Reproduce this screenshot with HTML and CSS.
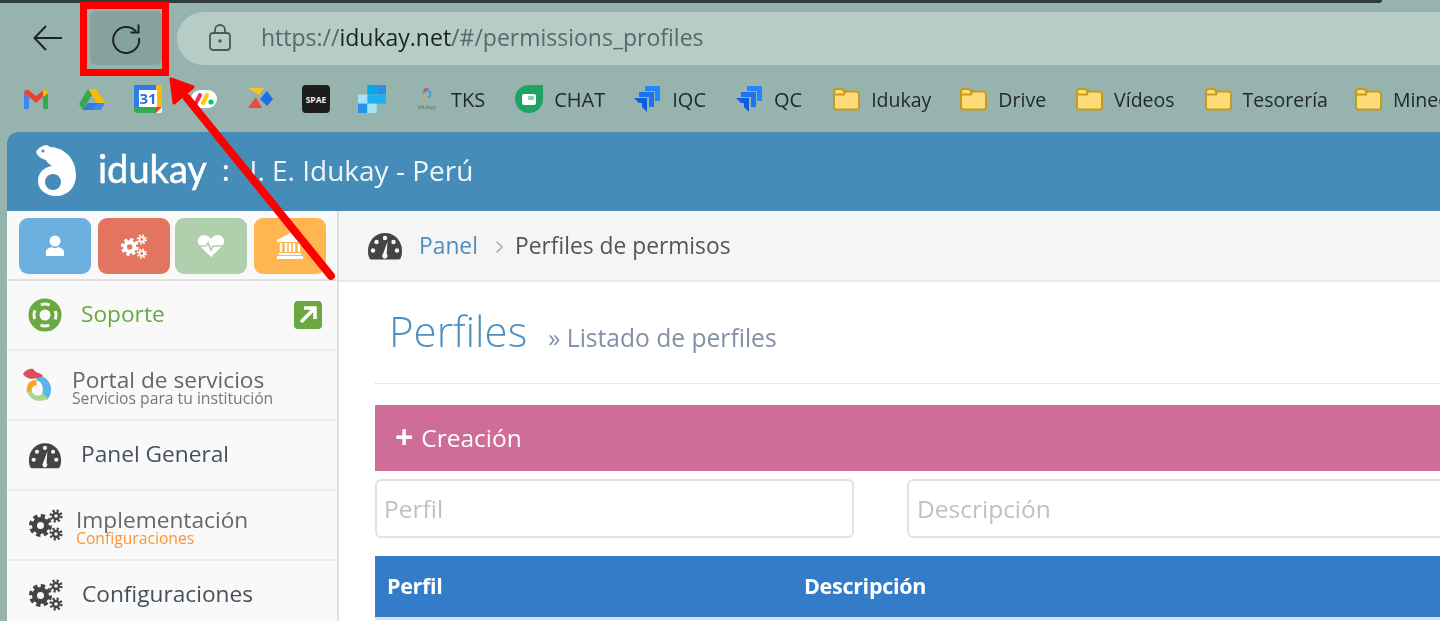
FILE: index.html
```html
<!DOCTYPE html>
<html lang="es">
<head>
<meta charset="utf-8">
<title>Perfiles de permisos</title>
<link rel="stylesheet" href="styles.css">
</head>
<body>
<svg class="defs" width="0" height="0" aria-hidden="true">
  <symbol id="gears" viewBox="0 0 36 32">
    <g fill="none" stroke="currentColor">
      <circle cx="12.5" cy="16.5" r="6" stroke-width="5"/>
      <circle cx="12.5" cy="16.5" r="9.5" stroke-width="4" stroke-dasharray="4.2 3.26"/>
      <circle cx="28" cy="7" r="3" stroke-width="2.4"/>
      <circle cx="28" cy="7" r="5.4" stroke-width="2.4" stroke-dasharray="2.2 2.04"/>
      <circle cx="28" cy="25" r="3" stroke-width="2.4"/>
      <circle cx="28" cy="25" r="5.4" stroke-width="2.4" stroke-dasharray="2.2 2.04"/>
    </g>
  </symbol>
  <symbol id="gauge" viewBox="0 0 36 28">
    <path fill="currentColor" d="M18 1C8 1 1 9 1 19c0 3 .5 5.500 1.500 7.500 .4.700 1 1 1.800 1h27.400c.8 0 1.400-.3 1.800-1 1-2 1.500-4.500 1.500-7.500C35 9 28 1 18 1z"/>
    <g fill="#f8f8f8">
      <circle cx="18" cy="6" r="2.200"/><circle cx="9.500" cy="10" r="2.200"/><circle cx="26.500" cy="10" r="2.200"/>
      <circle cx="6" cy="18.500" r="2.200"/><circle cx="30" cy="18.500" r="2.200"/>
      <path d="M20.500 9.500l-.8 12.500a2.600 2.600 0 1 1-3.700 0z"/>
    </g>
  </symbol>
  <symbol id="folder" viewBox="0 0 28 24">
    <path fill="#ffdc7a" stroke="#c79a1d" stroke-width="2" d="M2 4.500C2 3 3 2 4.500 2h5c1 0 1.500.5 2 1.500l.5 1h11.500C25 4.500 27 5.500 27 7v13c0 1.500-1 2.500-2.500 2.500h-20C3 22.500 2 21.500 2 20z"/>
    <path fill="none" stroke="#c79a1d" stroke-width="2" d="M2 7.500h10l1-3"/>
  </symbol>
  <symbol id="jira" viewBox="0 0 28 28">
    <path fill="#2684ff" d="M12 1h15v15h-5V6H12z"/>
    <path fill="#1a73f0" d="M6 7h15v15h-5V12H6z"/>
    <path fill="#0a5fe0" d="M1 13h13v14l-5-5v-4H6z"/>
  </symbol>
</svg>

<div class="tabstrip"></div>

<header class="toolbar">
  <button class="nav-btn" type="button" aria-label="Atrás">
    <svg width="32" height="28" viewBox="0 0 32 28"><path d="M30 14H3M14 2 2.500 14 14 26" fill="none" stroke="#1c2524" stroke-width="2"/></svg>
  </button>
  <button class="nav-btn nav-btn-hover" type="button" aria-label="Recargar">
    <svg width="32" height="32" viewBox="0 0 32 32"><path d="M26 9.500A13 13 0 1 0 29 16" fill="none" stroke="#1c2524" stroke-width="2"/><path d="M28.500 2.500v8h-8" fill="none" stroke="#1c2524" stroke-width="2"/></svg>
  </button>
  <div class="urlbar">
    <svg class="lock" width="24" height="28" viewBox="0 0 24 28"><rect x="2" y="9" width="20" height="17" rx="3" fill="none" stroke="#4e5a58" stroke-width="1.800"/><path d="M7 9V6a5 5 0 0 1 10 0v3" fill="none" stroke="#4e5a58" stroke-width="1.800"/><circle cx="12" cy="17" r="1.700" fill="#4e5a58"/></svg>
    <span class="url"><span class="url-dim">https://</span>idukay.net<span class="url-dim">/#/permissions_profiles</span></span>
  </div>
</header>

<nav class="bookmarks">
  <span class="bm-icon"><svg width="26" height="20" viewBox="0 0 26 20"><path d="M1 4v16h5V8z" fill="#4285f4"/><path d="M25 4v16h-5V8z" fill="#34a853"/><path d="M1 4c0-3 3-4 5-2.500L13 7l7-5.500C22 0 25 1 25 4l-5 4-7 6-7-6z" fill="#ea4335"/><path d="M20 1.500C22 0 25 1 25 4l-5 4z" fill="#fbbc04"/></svg></span>
  <span class="bm-icon"><svg width="26" height="23" viewBox="0 0 26 23"><path d="M9 1h8l9 14h-8z" fill="#fbbc04"/><path d="M9 1 0 16l4 6 9-15z" fill="#34a853"/><path d="M9 15h17l-4 7H4z" fill="#4285f4"/><path d="M9 15h9l-5 7H4z" fill="#2f7de0"/></svg></span>
  <span class="bm-icon"><svg width="28" height="28" viewBox="0 0 28 28"><rect width="28" height="28" rx="2" fill="#fff"/><path d="M0 0h22v5H5v17H0z" fill="#2e7de6"/><path d="M22 0h6v22h-5V5h-1z" fill="#fbbc04"/><path d="M0 22h22v6H2a2 2 0 0 1-2-2z" fill="#34a853"/><path d="M22 22h6l-6 6z" fill="#ea4335"/></svg><span class="cal-num">31</span></span>
  <span class="bm-icon"><svg width="26" height="20" viewBox="0 0 26 20"><rect width="26" height="18" y="1" rx="9" fill="#fff"/><path d="M5 14 9 6" stroke="#f62b54" stroke-width="4" stroke-linecap="round"/><path d="M12 14l4-8" stroke="#ffcc00" stroke-width="4" stroke-linecap="round"/><circle cx="20" cy="13" r="2.600" fill="#00ca72"/></svg></span>
  <span class="bm-icon"><svg width="26" height="24" viewBox="0 0 26 24"><path d="M1 1h16l-5 7z" fill="#f7c325"/><path d="M13 12 20 4l6 8-6 7z" fill="#1f6fe0"/><path d="M1 21 9 10l6 11z" fill="#ee4b3e"/></svg></span>
  <span class="bm-icon bm-spae">SPAE</span>
  <span class="bm-icon"><svg width="28" height="28" viewBox="0 0 28 28"><rect x="9.300" width="9.400" height="9.400" fill="#00a8e8"/><rect x="18.700" width="9.300" height="9.400" fill="#2a8de8"/><rect x="9.300" y="9.400" width="18.700" height="9.300" fill="#1fb0f0"/><rect y="9.400" width="9.300" height="9.300" fill="#a5e2f8"/><rect y="18.700" width="9.300" height="9.300" fill="#2a90ec"/><rect x="9.300" y="18.700" width="9.400" height="9.300" fill="#a5e2f8"/></svg></span>
  <a class="bm bm-tks"><svg width="26" height="28" viewBox="0 0 26 28"><circle cx="13" cy="9" r="3.500" fill="none" stroke="#3a9fe0" stroke-width="2"/><path d="M10 6c1-2 3-3 4-2" fill="none" stroke="#d34a4a" stroke-width="2"/><path d="M10 9c0 3 2 4 4 3.500" fill="none" stroke="#f5a524" stroke-width="2"/><text class="bm-idu-text" x="13" y="24" text-anchor="middle">idukay</text></svg>TKS</a>
  <a class="bm bm-chat"><svg width="28" height="28" viewBox="0 0 28 28"><path d="M14 0h14v14A14 14 0 1 1 14 0z" fill="#1ea362"/><rect x="7" y="9" width="14" height="11" rx="2" fill="#fff"/><rect x="13" y="11" width="6" height="4" fill="#1ea362" opacity=".5"/></svg>CHAT</a>
  <a class="bm bm-iqc"><svg width="28" height="28"><use href="#jira"/></svg>IQC</a>
  <a class="bm bm-qc"><svg width="28" height="28"><use href="#jira"/></svg>QC</a>
  <a class="bm bm-dir bm-f1"><svg width="28" height="24"><use href="#folder"/></svg>Idukay</a>
  <a class="bm bm-dir bm-f2"><svg width="28" height="24"><use href="#folder"/></svg>Drive</a>
  <a class="bm bm-dir bm-f3"><svg width="28" height="24"><use href="#folder"/></svg>Vídeos</a>
  <a class="bm bm-dir bm-f4"><svg width="28" height="24"><use href="#folder"/></svg>Tesorería</a>
  <a class="bm bm-dir"><svg width="28" height="24"><use href="#folder"/></svg>Mineduc</a>
</nav>

<div class="app">
  <header class="app-head">
    <svg class="logo" width="44" height="54" viewBox="0 0 44 54">
      <path fill="#fff" fill-rule="evenodd" d="M1 9C3 5 8 2 12 2l3 2C28 4 41 15 41 32 41 45 32 53 21 53 10 53 3 46 3 38 3 29 10 24 17 23 15 21 12 20 11 17 7 16 3 14 1 9zM18 31a8 8 0 1 0 .01 0z"/>
      <circle cx="8" cy="8" r="1.500" fill="#458cb9"/>
    </svg>
    <span class="wordmark">idukay</span>
    <span class="colon">:</span>
    <span class="school">I. E. Idukay - Perú</span>
  </header>
  <div class="app-body">
    <aside class="sidebar">
      <div class="quick">
        <a class="qbtn q-blue"><svg width="20" height="22" viewBox="0 0 20 22"><circle cx="10" cy="6" r="5.500" fill="#fff"/><path d="M1 21v-4c0-3 3-4 5.500-5 2 1.500 5 1.500 7 0 2.500 1 5.500 2 5.500 5v4z" fill="#fff"/></svg></a>
        <a class="qbtn q-red"><svg width="28" height="25"><use href="#gears"/></svg></a>
        <a class="qbtn q-green"><svg width="28" height="24" viewBox="0 0 28 24"><path fill="#fff" d="M14 23 2 11C-1 7 2 1 7 1c3 0 5 1.500 7 4 2-2.500 4-4 7-4 5 0 8 6 5 10z"/><path fill="none" stroke="#b0cfad" stroke-width="1.600" d="M0 12h9l2-3 3 7 2-4h12"/></svg></a>
        <a class="qbtn q-orange"><svg width="28" height="28" viewBox="0 0 28 28"><path fill="#fff" d="M14 1 27 8v2H1V8zM1 24h26v3H1zM3 21h22v2H3z"/><path fill="none" stroke="#fff" stroke-width="2.400" d="M5 11v9M10 11v9M14 11v9M18 11v9M23 11v9"/></svg></a>
      </div>
      <a class="side-row side-support">
        <svg class="side-ico" width="34" height="34" viewBox="0 0 34 34"><circle cx="17" cy="17" r="11" fill="none" stroke="#6aa842" stroke-width="11"/><circle cx="17" cy="17" r="11" fill="none" stroke="#f4f8ee" stroke-width="3" stroke-dasharray="9 8.280" stroke-dashoffset="4.500"/></svg>
        <span class="side-label">Soporte</span>
        <svg class="ext" width="28" height="28" viewBox="0 0 28 28"><rect width="28" height="28" rx="4" fill="#6aa842"/><path d="M7 21 20 8M10 7h11v11" fill="none" stroke="#fff" stroke-width="3.500"/></svg>
      </a>
      <a class="side-row">
        <svg class="side-portal" width="30" height="36" viewBox="0 0 30 36"><path fill="#5bb4ea" d="M16 8C24 9 30 16 29 24 28.500 28 27 31 25 33L20 27C22 22 21 15 14 13z"/><path fill="#f5a524" d="M14 13C6 13 4 20 5 25L10 26C9 22 10 19 15 18z"/><path fill="#a9d68f" d="M5 24C7 33 18 37 26 31L21 26C17 30 12 29 10 25z"/><path fill="#d9505c" d="M1 7C3 3 8 1 11 2L14 5C17 6 20 7 21 9 17 11 10 13 6 11 4 10 2 9 1 7z"/></svg>
        <span class="side-stack"><span class="side-label side-label-gray">Portal de servicios</span><span class="side-sub">Servicios para tu institución</span></span>
      </a>
      <a class="side-row">
        <svg class="side-ico" width="34" height="27"><use href="#gauge"/></svg>
        <span class="side-label">Panel General</span>
      </a>
      <a class="side-row">
        <svg class="side-ico side-ico-tight" width="36" height="32"><use href="#gears"/></svg>
        <span class="side-stack"><span class="side-label side-label-gray">Implementación</span><span class="side-sub side-sub-orange">Configuraciones</span></span>
      </a>
      <a class="side-row">
        <svg class="side-ico" width="36" height="32"><use href="#gears"/></svg>
        <span class="side-label side-label-near">Configuraciones</span>
      </a>
    </aside>
    <main class="main">
      <div class="crumbs">
        <svg class="crumb-ico" width="36" height="28"><use href="#gauge"/></svg>
        <a class="crumb-link">Panel</a>
        <svg class="crumb-sep" width="9" height="14" viewBox="0 0 9 14"><path d="M1.500 1.500 7 7l-5.500 5.500" fill="none" stroke="#aab0b5" stroke-width="1.600"/></svg>
        <span class="crumb-cur">Perfiles de permisos</span>
      </div>
      <div class="content">
        <div class="page-title">
          <h1>Perfiles</h1>
          <small>» Listado de perfiles</small>
        </div>
        <div class="band"><span class="plus">+</span>Creación</div>
        <div class="filters">
          <input class="field field-a" type="text" placeholder="Perfil">
          <input class="field field-b" type="text" placeholder="Descripción">
        </div>
        <div class="thead">
          <span class="th-a">Perfil</span>
          <span>Descripción</span>
        </div>
      </div>
    </main>
  </div>
</div>

<div class="callout-box"></div>
<svg class="callout-arrow" width="180" height="215" viewBox="0 0 180 215"><path d="M163 199 19 21" stroke="#fe0000" stroke-width="8" stroke-linecap="round" fill="none"/><path d="M3 2 25 10 6 26z" fill="#fe0000" stroke="#fe0000" stroke-width="3" stroke-linejoin="round"/></svg>
</body>
</html>
```

FILE: styles.css
```css
* { box-sizing: border-box; }
html, body { margin: 0; height: 100%; }
body {
  background: #97b3ae;
  font-family: "Open Sans", "Noto Sans", sans-serif;
  overflow: hidden;
  position: relative;
  color: #222;
}
a { color: inherit; text-decoration: none; }
.defs { position: absolute; }

.tabstrip {
  height: 3px;
  width: 1382px;
  background: #2f3d3a;
  border-bottom-right-radius: 3px;
}

.toolbar {
  display: flex;
  align-items: center;
  height: 54px;
  margin-top: 8px;
  padding-left: 12px;
  filter: blur(.4px);
}
.nav-btn {
  display: flex;
  align-items: center;
  justify-content: center;
  flex: none;
  width: 72px;
  height: 54px;
  border: 0;
  background: none;
  padding: 0;
  border-radius: 6px;
}
.nav-btn-hover {
  margin-left: 6px;
  background: #86a29d;
}
.urlbar {
  flex: 1;
  display: flex;
  align-items: center;
  margin-left: 15px;
  height: 53px;
  padding-left: 31px;
  background: #b5ccc7;
  border-radius: 27px 0 0 27px;
}
.url {
  margin: 0 0 2px 29px;
  font-size: 23px;
  color: #1a2423;
}
.url-dim { color: #5a6867; }

.bookmarks {
  display: flex;
  align-items: center;
  height: 34px;
  margin-top: 17px;
  padding-left: 22px;
  white-space: nowrap;
  font-size: 20px;
  color: #202a29;
  filter: blur(.4px);
}
.bm-icon {
  display: flex;
  align-items: center;
  justify-content: center;
  flex: none;
  position: relative;
  width: 28px;
  height: 28px;
  margin-right: 28px;
}
.cal-num {
  position: absolute;
  inset: 0;
  text-align: center;
  font-size: 15px;
  line-height: 27px;
  font-weight: 700;
  color: #2e6fd0;
}
.bm-spae {
  background: #1d1d1d;
  color: #eee;
  border-radius: 4px;
  font-size: 8.500px;
  font-weight: 700;
}
.bm {
  display: flex;
  align-items: center;
  flex: none;
  gap: 11px;
}
.bm svg { flex: none; }
.bm-idu-text { font-size: 6px; fill: #666; }
.bm-dir { font-size: 19.500px; }
.bm-tks { margin-right: 30px; }
.bm-chat { margin-right: 28px; }
.bm-iqc { margin-right: 29px; }
.bm-qc { margin-right: 30px; }
.bm-f1 { margin-right: 28px; }
.bm-f2 { margin-right: 29px; }
.bm-f3 { margin-right: 29px; }
.bm-f4 { margin-right: 26px; }

.app {
  margin: 16px 0 0 7px;
  background: #fff;
  border-top-left-radius: 10px;
  overflow: hidden;
  height: 489px;
  filter: blur(.4px);
}
.app-head {
  display: flex;
  align-items: center;
  height: 79px;
  padding-left: 28px;
  background: #458cb9;
  color: #fff;
}
.logo { flex: none; margin-bottom: 3px; }
.wordmark {
  margin: 0 0 7px 19px;
  font-family: "Lato", sans-serif;
  font-size: 38px;
  -webkit-text-stroke: .5px #fff;
}
.colon {
  margin: 0 0 4px 15px;
  font-size: 28px;
  font-weight: 600;
}
.school {
  margin: 0 0 4px 20px;
  font-size: 28px;
  color: #eef5f9;
}

.app-body { display: flex; height: 410px; }
.sidebar {
  width: 332px;
  flex: none;
  background: #f9f9f9;
  border-right: 2px solid #dfdfdf;
  color: #555;
}
.quick {
  display: flex;
  height: 70px;
  padding: 7px 0 0 12px;
  border-bottom: 2px solid #e2e2e2;
}
.qbtn {
  display: flex;
  align-items: center;
  justify-content: center;
  width: 72px;
  height: 56px;
  border-radius: 9px;
  color: #fff;
}
.q-blue { background: #6cb0e0; }
.q-red { background: #e27460; margin-left: 7px; }
.q-green { background: #b0cfad; margin-left: 5px; }
.q-orange { background: #ffb650; margin-left: 7px; }

.side-row {
  display: flex;
  align-items: center;
  height: 70px;
  padding-left: 21px;
  border-bottom: 2px solid #ececec;
  color: #444f5a;
}
.side-ico { flex: none; color: #444; }
.side-ico-tight { margin-right: -8px; }
.side-label {
  margin: 0 0 2px 19px;
  font-size: 22.700px;
  line-height: 28px;
}
.side-label-near { margin-left: 18px; }
.side-support { color: #6aa842; }
.ext { margin-left: auto; margin-right: 15px; }
.side-portal { margin-left: -6px; flex: none; }
.side-stack {
  display: flex;
  flex-direction: column;
  margin: 2px 0 0 20px;
}
.side-stack .side-label { margin: 0; }
.side-label-gray { color: #666; line-height: 24px; }
.side-sub { font-size: 15.700px; line-height: 13px; color: #777; }
.side-sub-orange { color: #ff9335; }

.main { flex: 1; min-width: 0; overflow: hidden; }
.crumbs {
  display: flex;
  align-items: center;
  height: 71px;
  padding-left: 28px;
  background: #f5f5f5;
  border-bottom: 2px solid #e8e8e8;
  font-size: 22.800px;
}
.crumb-ico { color: #444; flex: none; }
.crumb-link { margin-left: 16px; color: #4f8fc0; }
.crumb-sep { margin: 2px 0 0 17px; }
.crumb-cur { margin-left: 11px; color: #555; }

.content { padding: 0 0 0 36px; width: 1400px; }
.page-title {
  display: flex;
  align-items: baseline;
  height: 102px;
  padding: 20px 0 0 14px;
  border-bottom: 1px dotted #d5d5d5;
}
.page-title h1 {
  margin: 0;
  font-size: 42px;
  font-weight: 300;
  color: #4f8fc0;
}
.page-title small {
  margin-left: 21px;
  font-size: 24.600px;
  color: #8290a8;
}
.band {
  display: flex;
  align-items: center;
  height: 66px;
  margin-top: 21px;
  padding: 0 0 2px 20px;
  background: #cd6d98;
  color: #fff;
  font-size: 24.500px;
}
.plus { font-size: 32px; font-weight: 700; margin-right: 8px; line-height: 1; }
.filters {
  display: flex;
  gap: 53px;
  margin-top: 8px;
}
.field {
  height: 59px;
  padding: 0 8px;
  border: 2px solid #e2e2e2;
  border-radius: 6px;
  background: #fff;
  font-family: inherit;
  font-size: 24.500px;
}
.field::placeholder { color: #c0c0c0; opacity: 1; }
.field-a { width: 479px; padding-left: 7px; }
.field-b { width: 700px; }
.thead {
  display: flex;
  align-items: center;
  height: 64px;
  margin-top: 18px;
  padding: 0 0 2px 12px;
  background: #327cca;
  color: #fff;
  font-weight: 700;
  font-size: 21.500px;
  letter-spacing: -.3px;
  border-bottom: 3px solid #ddd;
}
.th-a { width: 417px; }

.callout-box {
  position: absolute;
  left: 80px;
  top: 2px;
  width: 89px;
  height: 74px;
  border: 7px solid #fe0000;
}
.callout-arrow {
  position: absolute;
  left: 168px;
  top: 77px;
}
```
